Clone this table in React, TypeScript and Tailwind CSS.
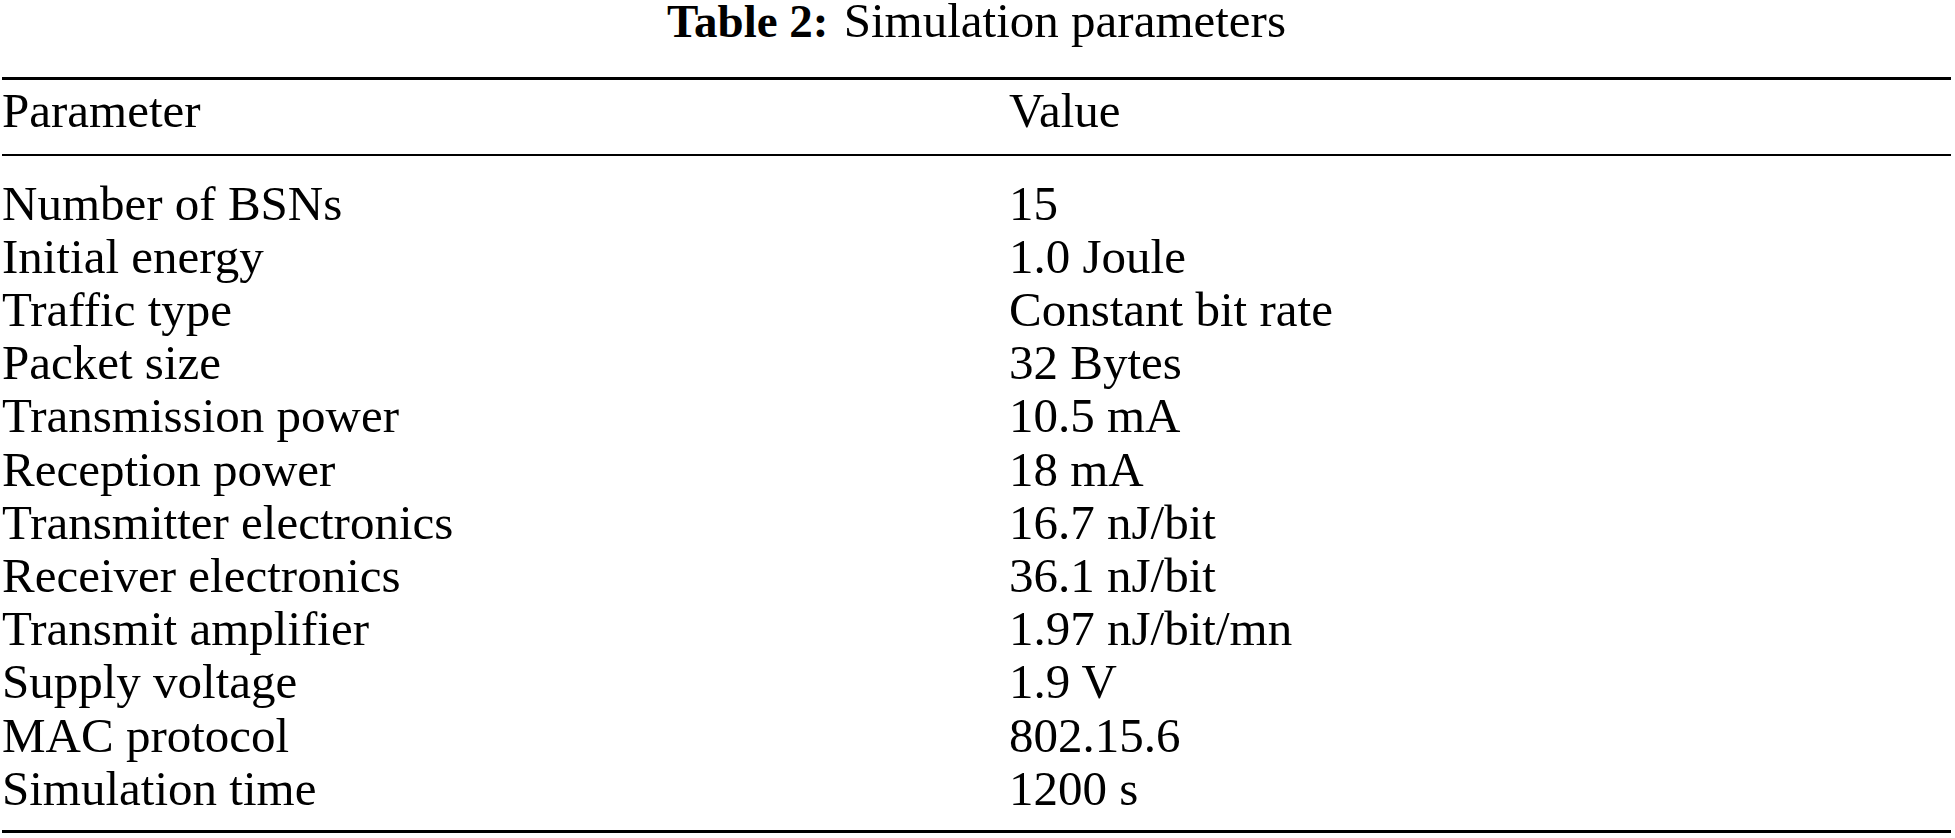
const rows: [string, string][] = [
  ['Number of BSNs', '15'],
  ['Initial energy', '1.0 Joule'],
  ['Traffic type', 'Constant bit rate'],
  ['Packet size', '32 Bytes'],
  ['Transmission power', '10.5 mA'],
  ['Reception power', '18 mA'],
  ['Transmitter electronics', '16.7 nJ/bit'],
  ['Receiver electronics', '36.1 nJ/bit'],
  ['Transmit amplifier', '1.97 nJ/bit/mn'],
  ['Supply voltage', '1.9 V'],
  ['MAC protocol', '802.15.6'],
  ['Simulation time', '1200 s'],
]

function Row({ left, right }: { left: string; right: string }): JSX.Element {
  return (
    <div className="grid h-[53.2px] grid-cols-[1007px_1fr] leading-[53.2px]">
      <div className="whitespace-nowrap">{left}</div>
      <div className="whitespace-nowrap">{right}</div>
    </div>
  )
}

export default function App(): JSX.Element {
  return (
    <div
      className="h-[838px] w-[1955px] overflow-hidden bg-white text-[49px] text-black"
      style={{ fontFamily: '"Liberation Serif", "Times New Roman", serif' }}
    >
      <div className="ml-[2px] w-[1949px]">
        <div className="text-center leading-[42px] whitespace-nowrap">
          <span className="text-[47px] font-bold">Table 2:</span>
          <span className="ml-[3px]"> Simulation parameters</span>
        </div>

        <div className="mt-[35px] h-[3px] bg-black" />
        <div className="pt-[3.5px] pb-[17.5px]">
          <Row left="Parameter" right="Value" />
        </div>
        <div className="h-[2px] bg-black" />

        <div className="pt-[20.5px] pb-[15.4px]">
          {rows.map(([l, r]) => (
            <Row key={l} left={l} right={r} />
          ))}
        </div>
        <div className="h-[3px] bg-black" />
      </div>
    </div>
  )
}
